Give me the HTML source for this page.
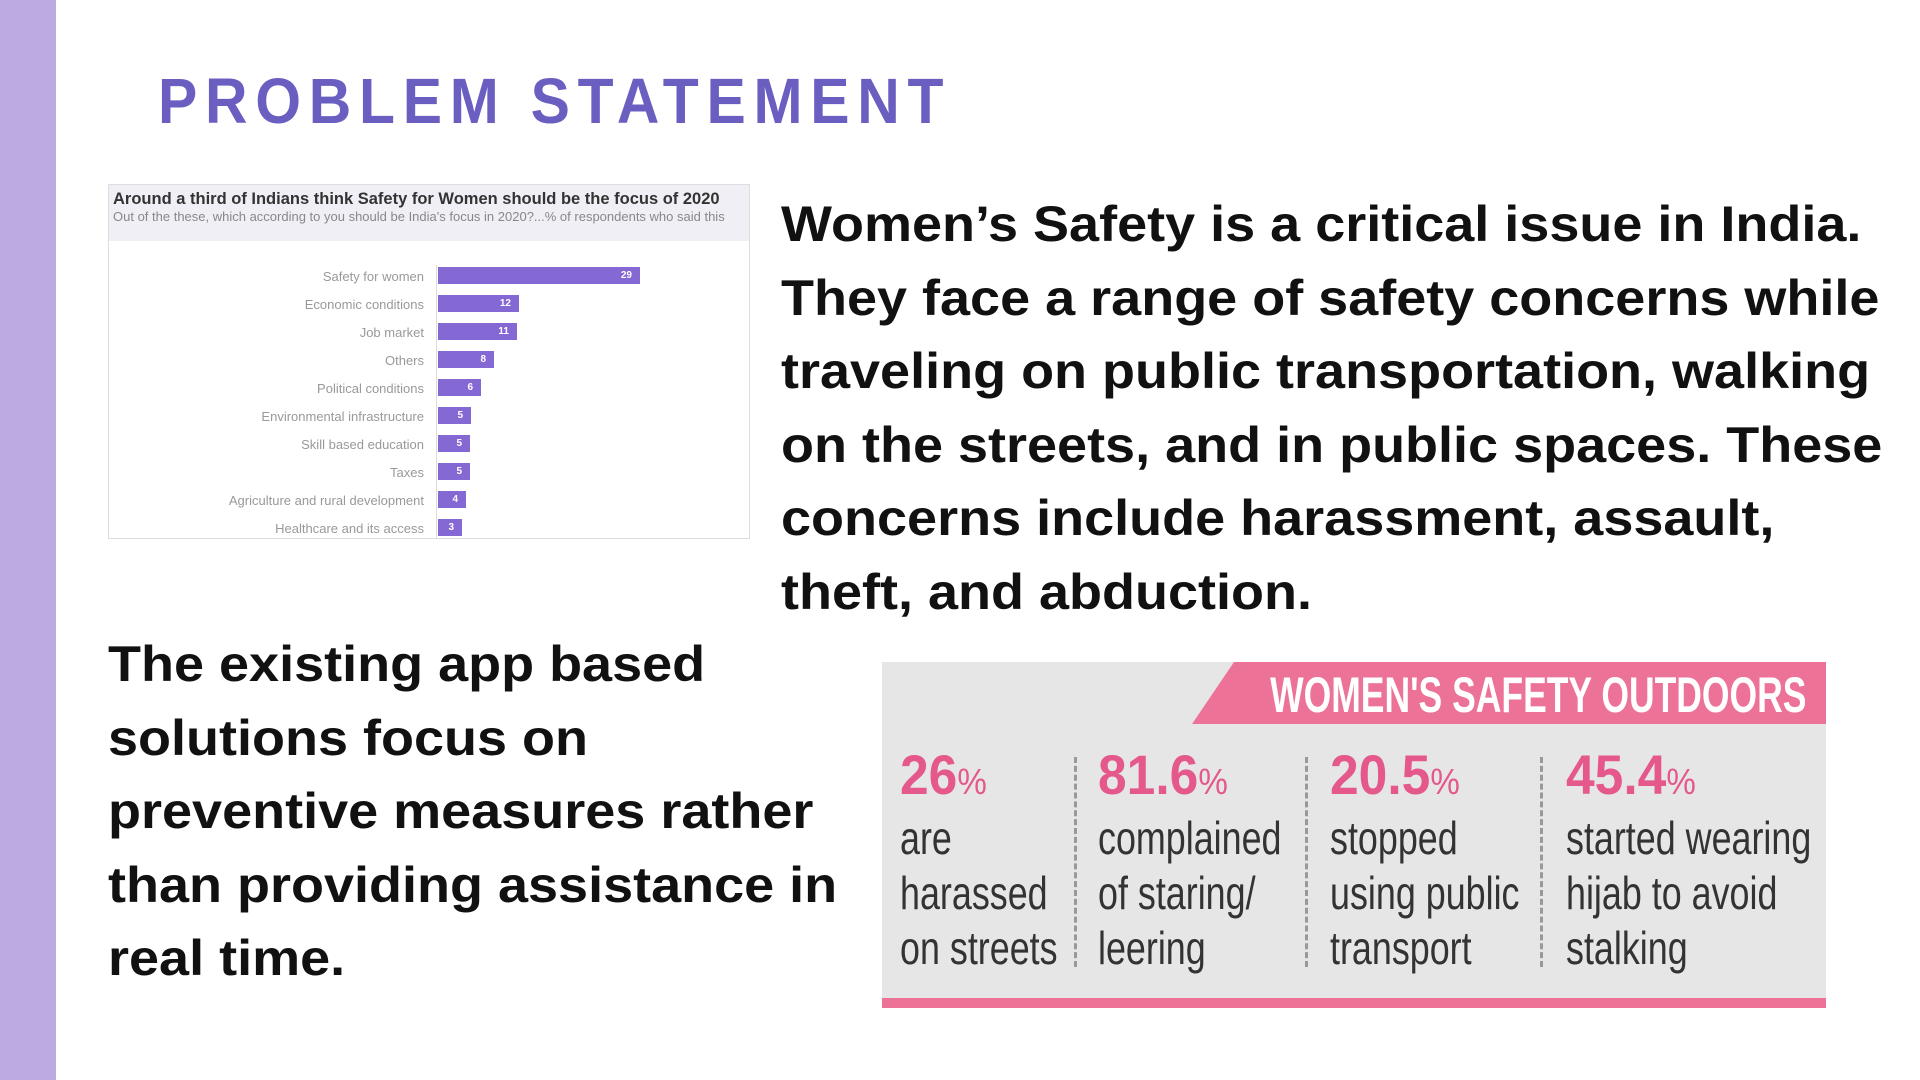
<!DOCTYPE html>
<html><head><meta charset="utf-8"><style>
*{margin:0;padding:0;box-sizing:border-box}
body{width:1920px;height:1080px;background:#fff;position:relative;overflow:hidden;font-family:"Liberation Sans",sans-serif}
.bar{position:absolute;left:0;top:0;width:56px;height:1080px;background:#bcaae2}
.title{position:absolute;left:158px;top:66px;font-size:64px;font-weight:bold;color:#6a5fc1;letter-spacing:8.4px;line-height:70px;transform:scaleX(.92);transform-origin:left}
.p{position:absolute;font-weight:bold;color:#111;font-size:50px;line-height:73.5px;white-space:nowrap;transform:scaleX(1.08);transform-origin:left}
.chart{position:absolute;left:108px;top:184px;width:642px;height:355px;border:1px solid #ddd;background:#fff;overflow:hidden}
.chart .hd{background:#f1eff6;height:56px;padding:5px 4px}
.chart .t1{font-size:16.5px;font-weight:bold;color:#333;white-space:nowrap}
.chart .t2{font-size:13px;color:#888;white-space:nowrap}
.row{position:absolute;left:0;height:28px;width:100%}
.row .l{position:absolute;right:325px;width:320px;text-align:right;font-size:13px;color:#999;top:2px}
.row .b{position:absolute;left:329px;top:0px;height:17px;background:#8468d4;color:#fff;font-size:10px;font-weight:bold;text-align:right;padding-right:8px;line-height:17px}
.axis{position:absolute;left:327px;top:80px;width:1px;height:275px;background:#ddd}
.info{position:absolute;left:882px;top:662px;width:944px;height:346px;background:#e6e6e6}
.info .ban{position:absolute;right:0;top:0;width:634px;height:62px;background:#ec7397;clip-path:polygon(42px 0,100% 0,100% 100%,0 100%)}
.info .ban span{position:absolute;right:20px;top:4px;font-weight:bold;color:#fff;font-size:50px;white-space:nowrap;transform:scaleX(.71);transform-origin:right}
.info .bot{position:absolute;left:0;bottom:0;width:100%;height:10px;background:#ec7397}
.col{position:absolute;top:84px;color:#333;font-size:46px;line-height:55px;white-space:nowrap;transform:scaleX(.78);transform-origin:left}
.col .n{color:#e4588b;font-weight:bold;font-size:56px;line-height:58px;transform:scaleX(1.18);transform-origin:left}
.col .n small{font-size:36px;font-weight:normal}
.sep{position:absolute;top:95px;height:210px;border-left:3px dashed #999}
</style></head><body>
<div class="bar"></div>
<div class="title">PROBLEM STATEMENT</div>

<div class="chart">
<div class="hd"><div class="t1">Around a third of Indians think Safety for Women should be the focus of 2020</div><div class="t2">Out of the these, which according to you should be India's focus in 2020?...% of respondents who said this</div></div>
<div class="axis"></div>
<div class="row" style="top:82px"><div class="l">Safety for women</div><div class="b" style="width:202px">29</div></div>
<div class="row" style="top:110px"><div class="l">Economic conditions</div><div class="b" style="width:81px">12</div></div>
<div class="row" style="top:138px"><div class="l">Job market</div><div class="b" style="width:79px">11</div></div>
<div class="row" style="top:166px"><div class="l">Others</div><div class="b" style="width:56px">8</div></div>
<div class="row" style="top:194px"><div class="l">Political conditions</div><div class="b" style="width:43px">6</div></div>
<div class="row" style="top:222px"><div class="l">Environmental infrastructure</div><div class="b" style="width:33px">5</div></div>
<div class="row" style="top:250px"><div class="l">Skill based education</div><div class="b" style="width:32px">5</div></div>
<div class="row" style="top:278px"><div class="l">Taxes</div><div class="b" style="width:32px">5</div></div>
<div class="row" style="top:306px"><div class="l">Agriculture and rural development</div><div class="b" style="width:28px">4</div></div>
<div class="row" style="top:334px"><div class="l">Healthcare and its access</div><div class="b" style="width:24px">3</div></div>
</div>

<div class="p" style="left:781px;top:188px">Women’s Safety is a critical issue in India.<br>They face a range of safety concerns while<br>traveling on public transportation, walking<br>on the streets, and in public spaces. These<br>concerns include harassment, assault,<br>theft, and abduction.</div>

<div class="p" style="left:108px;top:628px">The existing app based<br>solutions focus on<br>preventive measures rather<br>than providing assistance in<br>real time.</div>

<div class="info">
<div class="ban"><span>WOMEN'S SAFETY OUTDOORS</span></div>
<div class="col" style="left:18px"><div class="n">26<small>%</small></div>are<br>harassed<br>on streets</div>
<div class="sep" style="left:192px"></div>
<div class="col" style="left:216px"><div class="n">81.6<small>%</small></div>complained<br>of staring/<br>leering</div>
<div class="sep" style="left:423px"></div>
<div class="col" style="left:448px"><div class="n">20.5<small>%</small></div>stopped<br>using public<br>transport</div>
<div class="sep" style="left:658px"></div>
<div class="col" style="left:684px"><div class="n">45.4<small>%</small></div>started wearing<br>hijab to avoid<br>stalking</div>
<div class="bot"></div>
</div>
</body></html>
